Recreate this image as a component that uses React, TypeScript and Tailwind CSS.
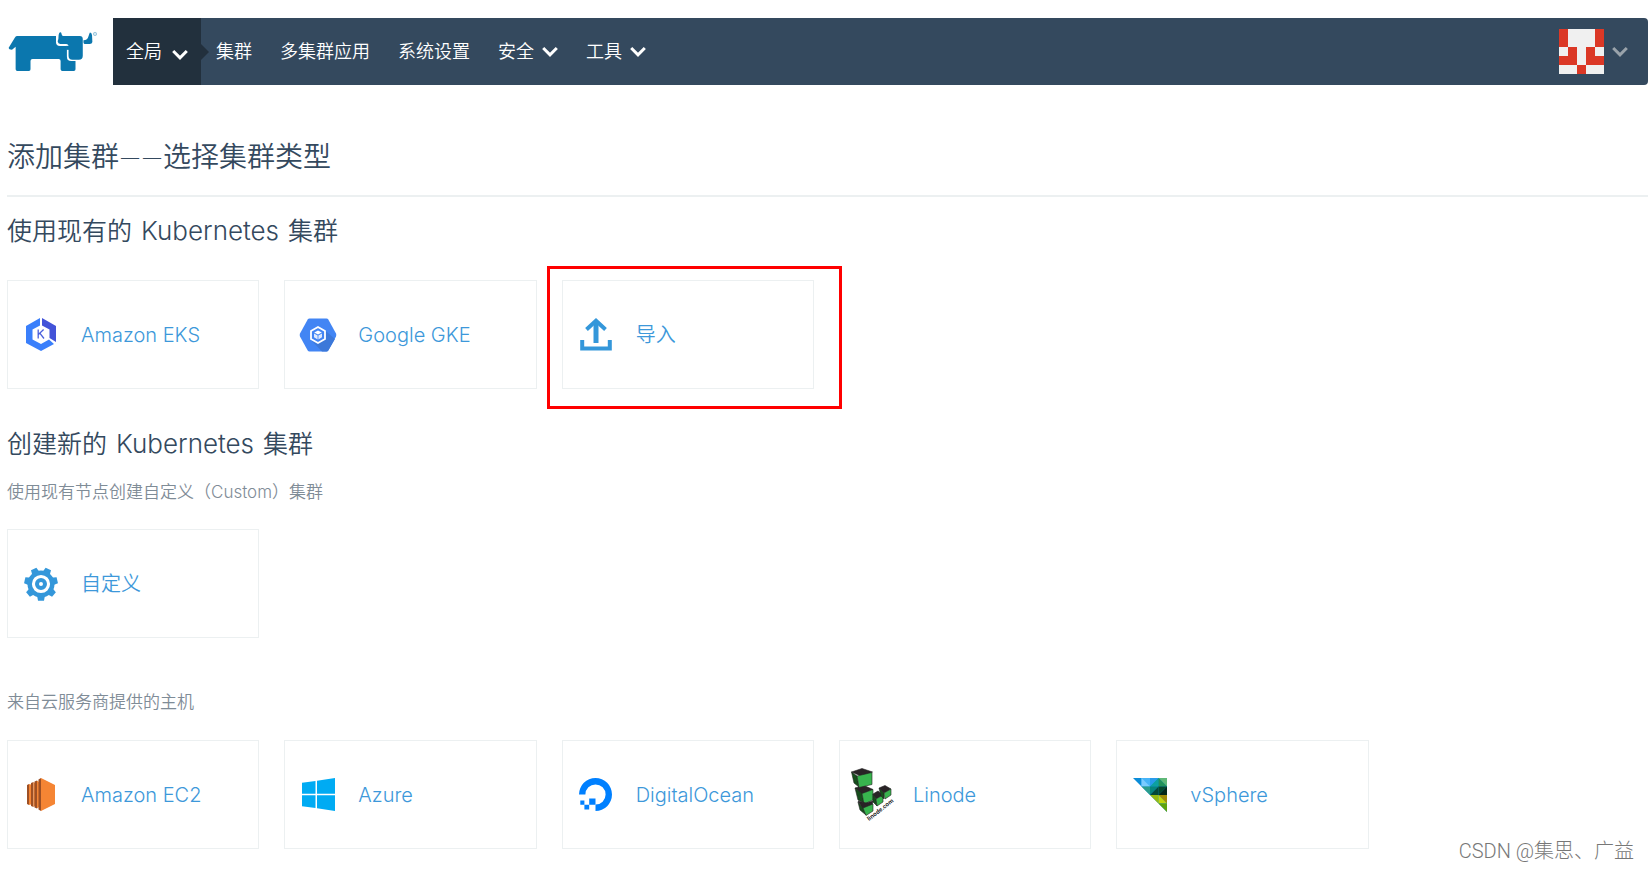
import type { ReactNode } from 'react'

function RancherLogo() {
  return (
    <svg viewBox="24 90 276 130" className="w-[92px] h-[43px]" role="img" aria-label="Rancher">
      <g fill="#0b77ae">
        <path d="M50 108H168V126Q168 138 180 138H201V170Q201 184 214 184H227V209Q227 214 222 214H187Q182 214 182 209V184Q182 178 176 178H97Q91 178 91 184V209Q91 214 86 214H51Q46 214 46 209V141L35 150Q25 150 25 144L43 114Q46 108 50 108Z" />
        <path d="M180 97Q184 95 185 102Q185 108 190 108H240Q249 108 249 117V168Q249 180 237 180H218Q206 180 206 168V140Q206 132 199 132H181Q174 132 173 124Q176 118 176 105Q177 99 180 97Z" />
        <path d="M199 138H208V150H199Z" />
        <path d="M270 98Q276 97 277 106L278 126Q277 132 270 132H254Q251 131 251 127V121Q264 121 266 110Z" />
      </g>
      <circle cx="286" cy="102" r="5" fill="#d5e8f2" stroke="#7db6d3" strokeWidth="2" />
    </svg>
  )
}

function Chevron({ color = '#ffffff' }: { color?: string }) {
  return (
    <svg viewBox="0 0 16 12" className="w-4 h-3 shrink-0" fill="none" stroke={color} strokeWidth="3">
      <path d="M1.2 2L8 8.8L14.8 2" />
    </svg>
  )
}

function Avatar() {
  const grid = ['10001', '10001', '01010', '11011', '00100']
  return (
    <svg viewBox="0 0 5 5" className="size-[45px]" shapeRendering="crispEdges" role="img" aria-label="用户">
      <rect width="5" height="5" fill="#f0f0f0" />
      {grid.map((row, y) =>
        row.split('').map((c, x) =>
          c === '1' ? <rect key={`${x}-${y}`} x={x} y={y} width="1" height="1" fill="#db3826" /> : null
        )
      )}
    </svg>
  )
}

function EksIcon() {
  return (
    <svg viewBox="0 0 30 33" className="w-[30px] h-[33px]">
      <path d="M14 0L0 8V25L15 33L28 26L23 21.5L15 26L6.5 21.5V11.5L14 7.5Z" fill="#3a7ffb" />
      <path d="M16 0L30 8V24L23.5 20V11.5L16 7.5Z" fill="#4353d8" />
      <path d="M12.2 11.5V20.5M17.6 11.5L12.4 16.5M13.8 15.2L18 20.5" stroke="#4a60dc" strokeWidth="1.3" fill="none" />
    </svg>
  )
}

function GkeIcon() {
  return (
    <svg viewBox="0 0 38 34" className="w-[38px] h-[34px]">
      <path d="M10.5 0.5H27.5Q28.7 0.5 29.3 1.5L37 15.5Q37.6 17 37 18.5L29.3 32.5Q28.7 33.5 27.5 33.5H10.5Q9.3 33.5 8.7 32.5L1 18.5Q0.4 17 1 15.5L8.7 1.5Q9.3 0.5 10.5 0.5Z" fill="#4285f4" />
      <path d="M25.5 12L36 21L29.3 32.5Q28.7 33.5 27.5 33.5H23L12 22L19 25.5L26 21Z" fill="#3c78d9" />
      <path d="M19 9L26 13V21L19 25L12 21V13Z" fill="none" stroke="#fff" strokeWidth="1.8" />
      <path d="M19 12.5L22.8 14.5L19 16.6L15.2 14.5Z" fill="#fff" />
      <path d="M15 15.4L18.6 17.4V21.4L15 19.3ZM23 15.4L19.4 17.4V21.4L23 19.3Z" fill="#dfeafd" />
    </svg>
  )
}

function ImportIcon() {
  return (
    <svg viewBox="0 0 32 34" className="w-8 h-[34px]" fill="none" stroke="#3497da" strokeWidth="4">
      <path d="M16 25V3" strokeWidth="5" />
      <path d="M6.5 11.5L16 2.8L25.5 11.5" />
      <path d="M2.2 22V30.5H29.8V22" />
    </svg>
  )
}

function GearIcon() {
  const teeth = [0, 51, 103, 154, 206, 257, 309]
  return (
    <svg viewBox="0 0 34 34" className="size-[34px]">
      <g transform="rotate(180 17 17)" fill="#3497da">
        {teeth.map((a) => (
          <path key={a} d="M12.8 7L14 0.3H20L21.2 7Z" transform={`rotate(${a} 17 17)`} />
        ))}
      </g>
      <circle cx="17" cy="17" r="11.3" fill="none" stroke="#3497da" strokeWidth="4.4" />
      <circle cx="17" cy="17" r="4" fill="none" stroke="#3497da" strokeWidth="4" />
    </svg>
  )
}

function Ec2Icon() {
  return (
    <svg viewBox="0 0 28 33" className="w-7 h-[33px]">
      <path d="M0 7L2 6V27L0 26Z" fill="#9d5025" />
      <path d="M2 6L4 6.5V26.5L2 27Z" fill="#f58534" />
      <path d="M4 5L6.5 4V29L4 28Z" fill="#9d5025" />
      <path d="M6.5 4L8 5V28L6.5 29Z" fill="#f58534" />
      <path d="M7.5 3.5L10 2.5V30.5L7.5 29.5Z" fill="#9d5025" />
      <path d="M10 2.5L12 4V29L10 30.5Z" fill="#f58534" />
      <path d="M11.5 1.5L14 0V33L11.5 31.5Z" fill="#9d5025" />
      <path d="M14 0L28 7V26L14 33Z" fill="#f58534" />
    </svg>
  )
}

function AzureIcon() {
  return (
    <svg viewBox="0 0 33 33" className="size-[33px]" fill="#00abf3">
      <path d="M0 4.8L13.5 2.9V15.7H0Z" />
      <path d="M15 2.7L33 0V15.7H15Z" />
      <path d="M0 17.3H13.5V30.1L0 28.2Z" />
      <path d="M15 17.3H33V33L15 30.3Z" />
    </svg>
  )
}

function DigitalOceanIcon() {
  return (
    <svg viewBox="0 0 33 33" className="size-[33px]" fill="#0080ff">
      <path d="M16.5 33V26.6A10.1 10.1 0 1 0 6.4 16.5H0A16.5 16.5 0 1 1 16.5 33Z" />
      <path d="M10.2 20.5H16.5V26.7H10.2ZM5.4 26.7H10.2V31.5H5.4ZM1.3 22.6H5.4V26.7H1.3Z" />
    </svg>
  )
}

function LinodeIcon() {
  return (
    <svg viewBox="0 0 44 53" className="w-11 h-[53px] overflow-visible" strokeLinejoin="round">
      <g stroke="#222" strokeWidth="0.6">
        <path d="M4 20L13 17.5L22 21.5L11 26Z" fill="#292326" />
        <path d="M4 20L11 25.5L13 35L7 32Z" fill="#164d1c" />
        <path d="M11 25.5L22 21.5V32L13 36Z" fill="#38b44e" />
        <path d="M7 33L15 35L22 33L21 38L12 41Z" fill="#292326" />
        <path d="M7 34L12 40L15 47L9 42Z" fill="#164d1c" />
        <path d="M12 40L22 36V43L15 47.5Z" fill="#38b44e" />
        <path d="M0.5 4L11 0.5L21.5 4L11 8.5Z" fill="#292326" />
        <path d="M0.5 4L6 8L8 19L3 15Z" fill="#164d1c" />
        <path d="M6 8L21 4.5V16.5L8 19.5Z" fill="#38b44e" />
        <path d="M22 26L27 23L32 27L25 31Z" fill="#292326" />
        <path d="M22 26L25 31L26 38L22 34Z" fill="#164d1c" />
        <path d="M25 31L32 27V34L26 38Z" fill="#38b44e" />
        <path d="M28 20L34 17.5L40 21L33 25Z" fill="#292326" />
        <path d="M28 20L33 25V31L30 28Z" fill="#164d1c" />
        <path d="M33 25L40 21V27L34 31Z" fill="#38b44e" />
      </g>
      <text
        x="18"
        y="53"
        transform="rotate(-38 18 53)"
        fill="#111"
        className="font-['Liberation_Sans'] text-[6px] font-bold"
      >
        linode.com
      </text>
    </svg>
  )
}

function VsphereIcon() {
  return (
    <svg viewBox="0 0 34 34" className="size-[34px]">
      <path d="M0 0H34V34Z" fill="#0a8cd8" />
      <path d="M8.5 0H25.5L17 8.5H8.5Z" fill="#45b4f8" />
      <path d="M8.5 0L17 8.5H8.5Z" fill="#7accff" />
      <path d="M17 0H25.5L17 8.5Z" fill="#2a9bea" />
      <path d="M25.5 0V8.5H17Z" fill="#0da0a0" />
      <path d="M25.5 0H34V8.5Z" fill="#5fb878" />
      <path d="M25.5 0L34 8.5H25.5Z" fill="#23935a" />
      <path d="M8.5 8.5H17V17Z" fill="#2a9d8c" />
      <path d="M17 8.5H25.5L17 17Z" fill="#08857c" />
      <path d="M25.5 8.5V17H17Z" fill="#04483a" />
      <path d="M25.5 8.5H34L25.5 17Z" fill="#06492c" />
      <path d="M34 8.5V17H25.5Z" fill="#03281a" />
      <path d="M17 17H25.5V25.5Z" fill="#95b913" />
      <path d="M25.5 17H34V25.5Z" fill="#a08b06" />
      <path d="M25.5 17L34 25.5H25.5Z" fill="#c4d60c" />
      <path d="M25.5 25.5H34V34Z" fill="#5ea30c" />
    </svg>
  )
}

function NavItem({ label, dropdown }: { label: string; dropdown?: boolean }) {
  if (dropdown) {
    return (
      <button type="button" className="flex items-center gap-2">
        {label}
        <Chevron />
      </button>
    )
  }
  return <a href="#">{label}</a>
}

type Driver = { name: string; icon: ReactNode }

const existing: Driver[] = [
  { name: 'Amazon EKS', icon: <EksIcon /> },
  { name: 'Google GKE', icon: <GkeIcon /> },
  { name: '导入', icon: <ImportIcon /> },
]

const custom: Driver[] = [{ name: '自定义', icon: <GearIcon /> }]

const cloud: Driver[] = [
  { name: 'Amazon EC2', icon: <Ec2Icon /> },
  { name: 'Azure', icon: <AzureIcon /> },
  { name: 'DigitalOcean', icon: <DigitalOceanIcon /> },
  { name: 'Linode', icon: <LinodeIcon /> },
  { name: 'vSphere', icon: <VsphereIcon /> },
]

function DriverGrid({ drivers, highlight }: { drivers: Driver[]; highlight?: string }) {
  return (
    <div className="grid grid-cols-6 gap-[25px] pr-0.5">
      {drivers.map((d) => (
        <a
          key={d.name}
          href="#"
          className="relative flex items-center h-[109px] border border-[#ecf0f1] text-xl text-[#3d98da]"
        >
          <span className="flex justify-center w-[66px] mr-[7px] shrink-0">{d.icon}</span>
          {d.name}
          {highlight === d.name && (
            <span className="absolute -top-[15px] -left-4 -right-[29px] -bottom-[21px] border-3 border-[#ff0000]" />
          )}
        </a>
      ))}
    </div>
  )
}

function SectionTitle({ before, after }: { before: string; after: string }) {
  return (
    <h2 className="text-[25px] leading-8">
      {before} <span className="mx-0.5 text-[26px]">Kubernetes</span> {after}
    </h2>
  )
}

export default function App() {
  return (
    <div className="relative min-h-screen bg-white pt-[18px] pb-5 pr-0.5 font-['Inter','Noto_Sans_CJK_SC',sans-serif] font-[350] text-[#34495e]">
      <header className="flex items-center">
        <a href="#" className="w-[105px] ml-2 shrink-0">
          <RancherLogo />
        </a>
        <nav className="flex flex-1 h-[67px] rounded-r-sm bg-[#34495e] text-lg text-white">
          <button type="button" className="relative flex items-center gap-2.5 w-[88px] pl-[13px] bg-[#22303d]">
            全局
            <span className="pt-1.5">
              <Chevron />
            </span>
            <span className="absolute left-full top-1/2 -translate-y-1/2 border-y-8 border-l-8 border-y-transparent border-l-[#22303d]" />
          </button>
          <div className="flex items-center gap-7 pl-[15px]">
            <NavItem label="集群" />
            <NavItem label="多集群应用" />
            <NavItem label="系统设置" />
            <NavItem label="安全" dropdown />
            <NavItem label="工具" dropdown />
          </div>
          <button type="button" className="flex items-center gap-2 ml-auto pr-5">
            <Avatar />
            <Chevron color="#9aa3ab" />
          </button>
        </nav>
      </header>

      <main className="pl-[7px]">
        <h1 className="mt-[51px] pb-[19px] border-b-2 border-[#ecf0f1] font-['Lato','Noto_Sans_CJK_SC',sans-serif] text-[28px] leading-10">
          添加集群——选择集群类型
        </h1>

        <section className="flex flex-col gap-[33px] mt-[18px]">
          <SectionTitle before="使用现有的" after="集群" />
          <DriverGrid drivers={existing} highlight="导入" />
        </section>

        <section className="mt-[39px]">
          <SectionTitle before="创建新的" after="集群" />
          <p className="mt-5 mb-[25px] text-[17px] leading-6 text-[#7f8c97]">使用现有节点创建自定义（Custom）集群</p>
          <DriverGrid drivers={custom} />
          <p className="mt-[52px] mb-[26px] text-[17px] leading-6 text-[#7f8c97]">来自云服务商提供的主机</p>
          <DriverGrid drivers={cloud} />
        </section>
      </main>

      <div className="absolute right-4 bottom-1 font-['Roboto','Noto_Sans_CJK_SC',sans-serif] text-xl font-light text-[#777777]">
        CSDN @集思、广益
      </div>
    </div>
  )
}
